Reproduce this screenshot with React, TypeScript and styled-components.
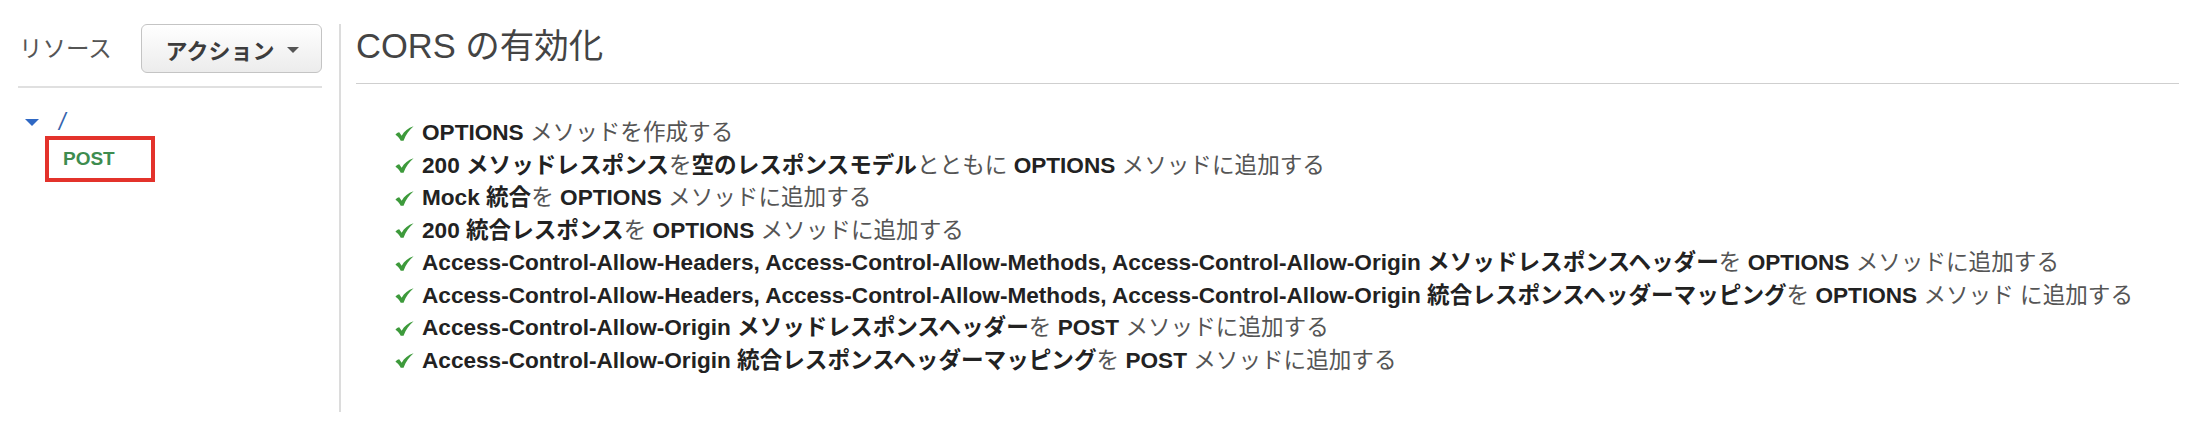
import React from "react";
import styled, { createGlobalStyle } from "styled-components";

const GlobalStyle = createGlobalStyle`
  html, body {
    margin: 0;
    padding: 0;
    background: #ffffff;
  }
  body {
    font-family: "Liberation Sans", "Noto Sans CJK JP", Arial, sans-serif;
    color: #444;
  }
`;

type Part = { text: string; bold?: boolean };

const steps: Part[][] = [
  [{ text: "OPTIONS", bold: true }, { text: " メソッドを作成する" }],
  [
    { text: "200 メソッドレスポンス", bold: true },
    { text: "を" },
    { text: "空のレスポンスモデル", bold: true },
    { text: "とともに " },
    { text: "OPTIONS", bold: true },
    { text: " メソッドに追加する" },
  ],
  [
    { text: "Mock 統合", bold: true },
    { text: "を " },
    { text: "OPTIONS", bold: true },
    { text: " メソッドに追加する" },
  ],
  [
    { text: "200 統合レスポンス", bold: true },
    { text: "を " },
    { text: "OPTIONS", bold: true },
    { text: " メソッドに追加する" },
  ],
  [
    {
      text: "Access-Control-Allow-Headers, Access-Control-Allow-Methods, Access-Control-Allow-Origin メソッドレスポンスヘッダー",
      bold: true,
    },
    { text: "を " },
    { text: "OPTIONS", bold: true },
    { text: " メソッドに追加する" },
  ],
  [
    {
      text: "Access-Control-Allow-Headers, Access-Control-Allow-Methods, Access-Control-Allow-Origin 統合レスポンスヘッダーマッピング",
      bold: true,
    },
    { text: "を " },
    { text: "OPTIONS", bold: true },
    { text: " メソッド に追加する" },
  ],
  [
    { text: "Access-Control-Allow-Origin メソッドレスポンスヘッダー", bold: true },
    { text: "を " },
    { text: "POST", bold: true },
    { text: " メソッドに追加する" },
  ],
  [
    { text: "Access-Control-Allow-Origin 統合レスポンスヘッダーマッピング", bold: true },
    { text: "を " },
    { text: "POST", bold: true },
    { text: " メソッドに追加する" },
  ],
];

// heavy brush-style check mark
const CheckIcon = () => (
  <svg width="19" height="15" viewBox="0 0 18 14">
    <path
      d="M0.4 8.1 C1.5 6.9 2.6 6.2 4 5.9 L6.3 9.1 C8.8 5 12.4 1.7 17.6 0.2 C13.5 3.7 10.4 8 8.1 13.8 L5.4 13.8 C4.4 11.6 2.8 9.6 0.4 8.1 Z"
      fill="#3d9a3b"
    />
  </svg>
);

const App = () => {
  return (
    <>
      <GlobalStyle />
      <Page>
        <Sidebar>
          <SidebarHeader>
            <SidebarTitle>リソース</SidebarTitle>
            <ActionButton>
              アクション
              <Caret />
            </ActionButton>
          </SidebarHeader>
          <Tree>
            <TreeRoot>
              <ExpandArrow />
              <RootLink>/</RootLink>
            </TreeRoot>
            <MethodBox>
              <MethodName>POST</MethodName>
            </MethodBox>
          </Tree>
        </Sidebar>
        <Main>
          <Heading>CORS の有効化</Heading>
          <StepList>
            {steps.map((parts, index) => (
              <Step key={index}>
                <CheckIcon />
                <StepText>
                  {parts.map((p, i) =>
                    p.bold ? <Strong key={i}>{p.text}</Strong> : <span key={i}>{p.text}</span>
                  )}
                </StepText>
              </Step>
            ))}
          </StepList>
        </Main>
      </Page>
    </>
  );
};

const Page = styled.div`
  display: flex;
  width: 2190px;
  height: 432px;
  box-sizing: border-box;
  background: #fff;
`;

const Sidebar = styled.div`
  width: 339px;
  flex-shrink: 0;
  box-sizing: border-box;
  padding: 24px 17px 0 18px;
`;

const SidebarHeader = styled.div`
  display: flex;
  align-items: center;
  justify-content: space-between;
  padding-bottom: 13px;
  border-bottom: 2px solid #e0e0e0;
`;

const SidebarTitle = styled.div`
  font-size: 23.5px;
  line-height: 30px;
  color: #555;
  margin-left: 1px;
`;

const ActionButton = styled.div`
  display: flex;
  align-items: center;
  justify-content: center;
  gap: 13px;
  width: 181px;
  height: 49px;
  box-sizing: border-box;
  border: 1px solid #c4c4c4;
  border-radius: 6px;
  background: linear-gradient(#ffffff, #ececec);
  font-size: 22px;
  font-weight: bold;
  color: #3c3c3c;
  padding-left: 2px;
`;

const Caret = styled.span`
  width: 0;
  height: 0;
  border-left: 6px solid transparent;
  border-right: 6px solid transparent;
  border-top: 6px solid #555;
  margin-top: 2px;
`;

const Tree = styled.div`
  display: flex;
  flex-direction: column;
  padding-top: 19px;
`;

const TreeRoot = styled.div`
  display: flex;
  align-items: center;
  height: 30px;
  padding-left: 7px;
`;

const ExpandArrow = styled.span`
  width: 0;
  height: 0;
  border-left: 7px solid transparent;
  border-right: 7px solid transparent;
  border-top: 7px solid #2f68c4;
  margin-right: 20px;
`;

const RootLink = styled.span`
  font-size: 23px;
  font-style: italic;
  color: #3563ad;
  line-height: 30px;
`;

const MethodBox = styled.div`
  width: 110px;
  height: 46px;
  box-sizing: border-box;
  margin-left: 27px;
  margin-top: -1px;
  border: 4px solid #e3322b;
  display: flex;
  align-items: center;
  padding-left: 14px;
`;

const MethodName = styled.span`
  font-size: 19px;
  font-weight: bold;
  color: #3e8c4f;
`;

const Main = styled.div`
  flex: 1;
  margin-top: 24px;
  height: 386px;
  border-left: 2px solid #dcdcdc;
  padding: 2px 11px 0 15px;
`;

const Heading = styled.h1`
  margin: 0;
  font-size: 34.5px;
  font-weight: normal;
  line-height: 40px;
  color: #444;
  padding-bottom: 17px;
  border-bottom: 1px solid #cfcfcf;
`;

const StepList = styled.ul`
  list-style: none;
  margin: 33px 0 0;
  padding: 0 0 0 39px;
`;

const Step = styled.li`
  display: flex;
  align-items: center;
  height: 32.5px;
  line-height: 32.5px;
  gap: 8px;
`;

const StepText = styled.span`
  font-size: 22.6px;
  line-height: 32.5px;
  color: #555;
  white-space: nowrap;
`;

const Strong = styled.span`
  font-weight: bold;
  color: #222;
`;

export default App;
